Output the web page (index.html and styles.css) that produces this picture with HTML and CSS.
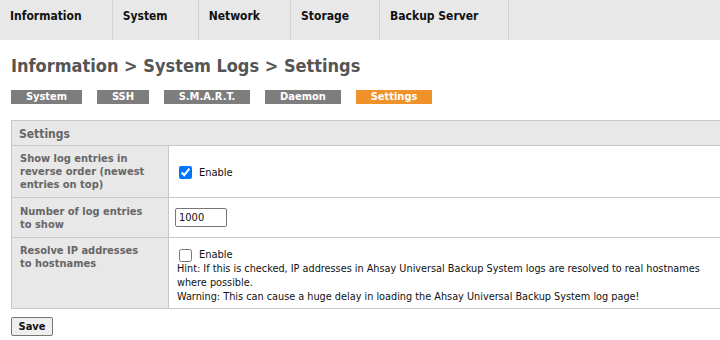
FILE: index.html
```html
<!DOCTYPE html>
<html>
<head>
<meta charset="utf-8">
<link rel="stylesheet" href="styles.css">
</head>
<body>
<nav class="topnav">
  <div class="nav-item">Information</div>
  <div class="nav-item">System</div>
  <div class="nav-item">Network</div>
  <div class="nav-item">Storage</div>
  <div class="nav-item">Backup Server</div>
</nav>
<main class="content">
  <h1 class="title">Information &gt; System Logs &gt; Settings</h1>
  <div class="tabs">
    <span class="tab tab-system">System</span>
    <span class="tab tab-ssh">SSH</span>
    <span class="tab tab-smart">S.M.A.R.T.</span>
    <span class="tab tab-daemon">Daemon</span>
    <span class="tab tab-settings active">Settings</span>
  </div>
  <table class="settings">
    <colgroup><col class="col-label"><col class="col-value"></colgroup>
    <tr class="head-row"><th colspan="2">Settings</th></tr>
    <tr class="row1">
      <td class="label">Show log entries in reverse order (newest entries on top)</td>
      <td class="value"><label class="check"><input type="checkbox" checked> Enable</label></td>
    </tr>
    <tr class="row2">
      <td class="label">Number of log entries to show</td>
      <td class="value"><input class="num" type="text" value="1000"></td>
    </tr>
    <tr class="row3">
      <td class="label">Resolve IP addresses to hostnames</td>
      <td class="value">
        <label class="check"><input type="checkbox"> Enable</label>
        <div class="hint">Hint: If this is checked, IP addresses in Ahsay Universal Backup System logs are resolved to real hostnames where possible.<br>Warning: This can cause a huge delay in loading the Ahsay Universal Backup System log page!</div>
      </td>
    </tr>
  </table>
  <button class="save">Save</button>
</main>
</body>
</html>
```
FILE: styles.css
```css
html, body {
  margin: 0;
  padding: 0;
  background: #fff;
  overflow: hidden;
  width: 720px;
  height: 340px;
}
body {
  font-family: "DejaVu Sans Condensed", "DejaVu Sans", sans-serif;
  font-size: 11px;
  color: #111;
}
.topnav {
  display: flex;
  height: 40px;
  background: #e8e8e8;
}
.nav-item {
  box-sizing: border-box;
  height: 40px;
  padding: 9px 30px 0 10px;
  border-right: 1px solid #d2d2d2;
  font-weight: bold;
  font-size: 12px;
  color: #111;
}
.content {
  padding-left: 11px;
}
.title {
  margin: 15px 0 0 0;
  font-size: 18px;
  line-height: 22px;
  color: #555;
  font-weight: bold;
}
.tabs {
  display: flex;
  margin-top: 13px;
  height: 14px;
}
.tab {
  box-sizing: border-box;
  height: 14px;
  background: #7d7d7d;
  color: #fff;
  font-weight: bold;
  font-size: 11px;
  line-height: 14px;
  text-align: center;
  margin-right: 15px;
}
.tab-system { width: 71px; }
.tab-ssh { width: 52px; }
.tab-smart { width: 86px; }
.tab-daemon { width: 76px; }
.tab-settings { width: 76px; }
.tab.active { background: #f0922a; }
.settings {
  margin-top: 16px;
  border-collapse: collapse;
  width: 709px;
  table-layout: fixed;
}
.col-label { width: 157px; }
.settings th, .settings td {
  border: 1px solid #c8c8c8;
  padding: 0;
  vertical-align: middle;
}
.settings th, .settings .value { border-right: none; }
.head-row { height: 25px; }
.head-row th {
  background: #e8e8e8;
  text-align: left;
  padding: 2px 0 0 7px;
  color: #666;
  font-size: 12px;
  font-weight: bold;
}
.label {
  background: #e8e8e8;
  color: #666;
  font-weight: bold;
  font-size: 11px;
  line-height: 13px;
  padding: 0 16px 0 8px !important;
}
.value {
  background: #fff;
  padding-left: 6px !important;
}
.row1 { height: 52px; }
.row2 { height: 40px; }
.row3 { height: 71px; }
.row3 .label { vertical-align: top; padding-top: 6px !important; }
.row3 .value { vertical-align: top; padding-top: 10px !important; }
.check {
  display: flex;
  align-items: center;
  gap: 7px;
  margin-left: 4px;
  height: 14px;
  font-size: 11px;
  line-height: 14px;
  color: #111;
}
.check input {
  margin: 0;
  width: 13px;
  height: 13px;
  accent-color: #0075ff;
}
.row1 .check { margin-top: 2px; }
.num {
  display: block;
  box-sizing: border-box;
  width: 52px;
  height: 19px;
  border: 1px solid #767676;
  border-radius: 2px;
  font-family: "DejaVu Sans Condensed", "DejaVu Sans", sans-serif;
  font-size: 11px;
  padding: 0 3px;
  margin-top: 0;
  color: #111;
}
.hint {
  line-height: 14px;
  font-size: 10.8px;
  color: #111;
  padding-left: 2px;
}
.save {
  display: block;
  margin-top: 8px;
  box-sizing: border-box;
  width: 42px;
  height: 19px;
  padding: 0;
  border: 1px solid #767676;
  border-radius: 2px;
  background: #efefef;
  font-family: "DejaVu Sans Condensed", "DejaVu Sans", sans-serif;
  font-weight: bold;
  font-size: 11px;
  color: #111;
}
```
